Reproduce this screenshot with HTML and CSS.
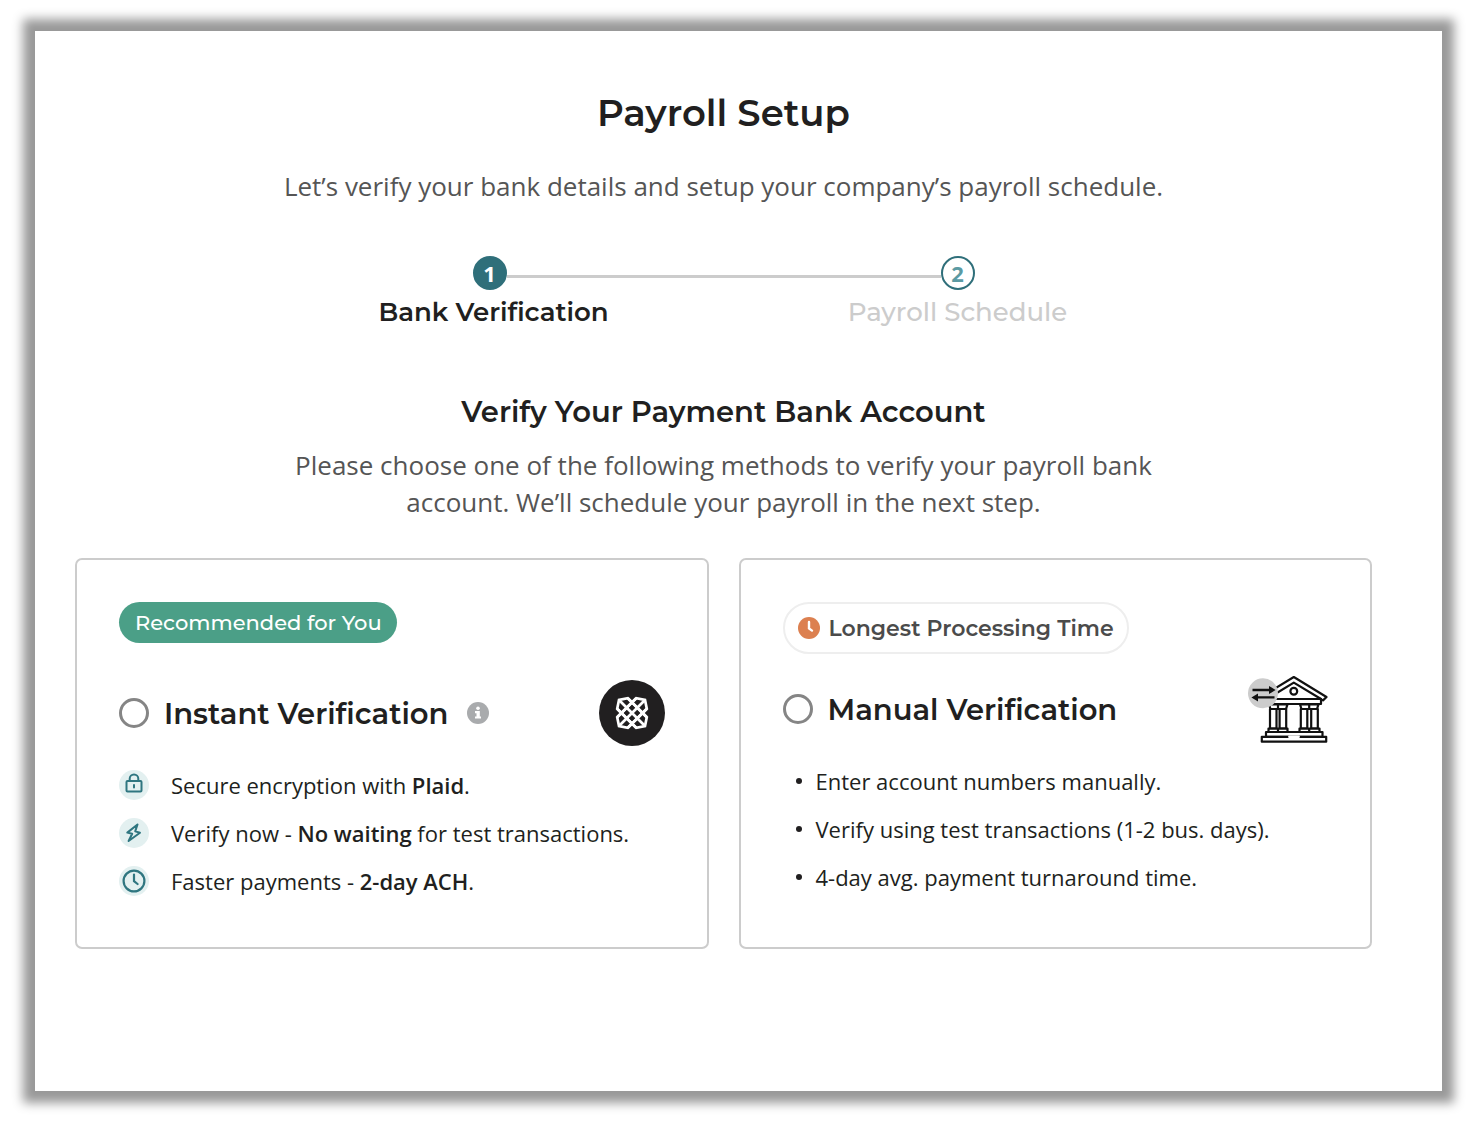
FILE: index.html
```html
<!DOCTYPE html>
<html lang="en">
<head>
<meta charset="UTF-8">
<meta name="viewport" content="width=device-width, initial-scale=1.0">
<title>Payroll Setup</title>
<link rel="stylesheet" href="styles.css">
</head>
<body>

<main class="panel">
  <h1>Payroll Setup</h1>
  <p class="intro">Let’s verify your bank details and setup your company’s payroll schedule.</p>

  <ol class="steps">
    <li class="step active">
      <span class="step-number">1</span>
      <span class="step-label">Bank Verification</span>
    </li>
    <li class="step">
      <span class="step-number">2</span>
      <span class="step-label">Payroll Schedule</span>
    </li>
  </ol>

  <h2>Verify Your Payment Bank Account</h2>
  <p class="help">Please choose one of the following methods to verify your payroll bank account. We’ll schedule your payroll in the next step.</p>

  <form class="methods">
    <section class="card instant">
      <div class="badge badge-green">Recommended for You</div>
      <div class="card-title">
        <input type="radio" id="instant" name="method" value="instant">
        <label for="instant">Instant Verification</label>
        <svg class="info" viewBox="0 0 22 22" aria-hidden="true">
          <circle cx="11" cy="11" r="11" fill="#a9abad"/>
          <circle cx="11" cy="6.2" r="1.8" fill="#fff"/>
          <path d="M8 9h4.8v5.4H14v2.2H8v-2.2h1.5v-3.2H8z" fill="#fff"/>
        </svg>
        <svg class="plaid-logo" viewBox="0 0 66 66" aria-hidden="true">
          <circle cx="33" cy="33" r="33" fill="#211f20"/>
          <g fill="none" stroke="#fff" stroke-width="2.7" stroke-linejoin="miter">
            <path d="M33 22.4L37.2 18.2L46 20L47.8 28.8L43.6 33L47.8 37.2L46 46L37.2 47.8L33 43.6L28.8 47.8L20 46L18.2 37.2L22.4 33L18.2 28.8L20 20L28.8 18.2z"/>
            <path d="M33 22.4L43.6 33L33 43.6L22.4 33z"/>
            <path d="M28.8 18.2L47.8 37.2M37.2 18.2L18.2 37.2M18.2 28.8L37.2 47.8M47.8 28.8L28.8 47.8"/>
            <path d="M20 20L46 46M46 20L20 46"/>
          </g>
        </svg>
      </div>
      <ul class="features">
        <li>
          <svg class="feature-icon" viewBox="0 0 30 30" aria-hidden="true">
            <circle cx="15" cy="15" r="15" fill="#e3f0f0"/>
            <g fill="none" stroke="#2f7680" stroke-width="2" stroke-linejoin="round" stroke-linecap="round">
              <rect x="7.5" y="11" width="15" height="10.5" rx="1"/>
              <path d="M10.7 11V8.7a4.3 4.3 0 0 1 8.6 0V11M15 15v2.6"/>
            </g>
          </svg>
          <span>Secure encryption with <b>Plaid</b>.</span>
        </li>
        <li>
          <svg class="feature-icon" viewBox="0 0 30 30" aria-hidden="true">
            <circle cx="15" cy="15" r="15" fill="#e3f0f0"/>
            <path d="M18.5 6.5L8.3 14.6L13.2 15.8L9.6 23L21 14.8L16.2 13.4z" fill="none" stroke="#2f7680" stroke-width="2" stroke-linejoin="round"/>
          </svg>
          <span>Verify now - <b>No waiting</b> for test transactions.</span>
        </li>
        <li>
          <svg class="feature-icon" viewBox="0 0 30 30" aria-hidden="true">
            <circle cx="15" cy="15" r="15" fill="#e3f0f0"/>
            <circle cx="15" cy="15" r="10.4" fill="none" stroke="#2f7680" stroke-width="2.2"/>
            <path d="M15 8.5v6.7l3.6 2.8" fill="none" stroke="#2f7680" stroke-width="2.2" stroke-linecap="round"/>
          </svg>
          <span>Faster payments - <b>2-day ACH</b>.</span>
        </li>
      </ul>
    </section>

    <section class="card manual">
      <div class="badge badge-outline">
        <svg class="clock" viewBox="0 0 22 22" aria-hidden="true">
          <circle cx="11" cy="11" r="11" fill="#dc8050"/>
          <path d="M11 5v6.4l3 2.2" fill="none" stroke="#fff" stroke-width="2.4" stroke-linecap="round"/>
        </svg>
        Longest Processing Time
      </div>
      <div class="card-title">
        <input type="radio" id="manual" name="method" value="manual">
        <label for="manual">Manual Verification</label>
        <svg class="bank" viewBox="0 0 80 68" aria-hidden="true">
          <g fill="#fff" stroke="#111" stroke-width="2.2" stroke-linejoin="round" stroke-linecap="round">
            <path d="M45.8 2L13 22l2.5 3.4L19 23.6h53l3 1.8L78.5 22z"/>
            <path d="M45.8 7.6L19 24h54z"/>
            <circle cx="45.8" cy="16.3" r="3.4"/>
            <path d="M19 24h54v5H19z"/>
            <path d="M21 29.4h18.5l-1.5 4.6H22.5zM52 29.4h18.5L69 34H53.5zM30 30v4M61.2 30v4"/>
            <path d="M22 34h6.5v19.6H22zM31.6 34h6.6v19.6h-6.6zM52.8 34h6.5v19.6h-6.5zM63.2 34h6.6v19.6h-6.6z"/>
            <path d="M20.5 53.6h19v3.4h-19zM51.5 53.6h20V57h-20zM30 53.6V57M61.2 53.6V57"/>
            <path d="M18 57h56.5v4.8H18z"/>
            <path d="M13.8 61.8h64.4v4.9H13.8z"/>
            <path d="M41.5 61.8h9" stroke="#fff" stroke-width="2.8"/>
          </g>
          <circle cx="15" cy="18.3" r="15" fill="#ccc"/>
          <path d="M4.5 15h18M8 22.4h18.5" stroke="#111" stroke-width="2.3"/>
          <path d="M21 11l6.6 4-6.6 4zM10 18.4l-6.6 4 6.6 4z" fill="#111"/>
        </svg>
      </div>
      <ul class="notes">
        <li>Enter account numbers manually.</li>
        <li>Verify using test transactions (1-2 bus. days).</li>
        <li>4-day avg. payment turnaround time.</li>
      </ul>
    </section>
  </form>
</main>

</body>
</html>
```

FILE: styles.css
```css
* {
  box-sizing: border-box;
}

body {
  margin: 0;
  padding: 31px 36px 31px 35px;
  background-color: #fff;
  color: #211f20;
  font-family: "Open Sans", sans-serif;
}

h1, h2, p, ul, ol {
  margin: 0;
  padding: 0;
}

ul, ol {
  list-style: none;
}

h1, h2, .step-label, .badge, .card-title {
  font-family: Montserrat, Inter, sans-serif;
  font-weight: 600;
}

.panel {
  min-height: calc(100vh - 62px);
  padding: 59px 70px 59px 40px;
  background-color: #fff;
  box-shadow: 0 0 10px 12px #999;
  text-align: center;
}

h1 {
  margin-bottom: 32px;
  font-size: 37px;
  line-height: 46px;
}

h2 {
  margin-bottom: 17px;
  font-size: 29px;
  line-height: 36px;
}

.intro, .help {
  color: #555;
  font-size: 26px;
  line-height: 37px;
}

.help {
  max-width: 880px;
  margin: 0 auto 37px;
}

/* progress steps */
.steps {
  display: flex;
  justify-content: center;
  margin: 51px 0 64px;
}

.step {
  display: grid;
  grid-template-columns: 1fr 34px 1fr;
  row-gap: 4px;
  align-items: center;
  width: 468px;
  color: #ccc;
}

.step.active {
  color: #211f20;
}

.step-number {
  grid-column: 2;
  grid-row: 1;
  height: 34px;
  border: 2px solid #2f6f7a;
  border-radius: 50%;
  color: #5b9aa3;
  font-size: 22px;
  font-weight: 700;
  line-height: 31px;
}

.active .step-number {
  background-color: #2f6f7a;
  color: #fff;
}

.step::before {
  content: "";
  grid-column: 1;
  grid-row: 1;
  height: 3px;
  margin-top: 6px;
  background-color: #ccc;
}

.step.active::before {
  grid-column: 3;
}

.step-label {
  grid-column: 1 / 4;
  font-size: 26px;
  font-weight: 500;
  line-height: 36px;
}

.active .step-label {
  padding-left: 8px;
  font-weight: 600;
}

/* verification methods */
.methods {
  display: grid;
  grid-template-columns: 1fr 1fr;
  gap: 30px;
  text-align: left;
}

.card {
  padding: 42px;
  border: 2px solid #ccc;
  border-radius: 7px;
}

.badge {
  display: flex;
  align-items: center;
  width: fit-content;
  border-radius: 26px;
  font-size: 22px;
}

.badge-green {
  height: 41px;
  margin-bottom: 37px;
  padding: 0 15px 0 16px;
  background-color: #4b9f87;
  color: #fff;
  font-size: 21px;
  font-weight: 500;
}

.badge-outline {
  gap: 9px;
  height: 52px;
  margin-bottom: 22px;
  padding: 0 13px;
  border: 2px solid #eee;
  color: #4b4b4b;
}

.clock, .info {
  width: 22px;
  height: 22px;
}

.card-title {
  display: flex;
  align-items: center;
  gap: 15px;
  height: 66px;
  font-size: 29px;
}

.card-title input {
  appearance: none;
  width: 30px;
  height: 30px;
  margin: 0;
  border: 3px solid #858585;
  border-radius: 50%;
}

.card-title input:checked {
  background-color: #2f6f7a;
  box-shadow: inset 0 0 0 4px #fff;
}

.info {
  margin-left: 4px;
}

.plaid-logo {
  width: 66px;
  height: 66px;
  margin-left: auto;
}

.bank {
  width: 80px;
  height: 68px;
  margin-left: auto;
}

.features, .notes {
  margin-top: 15px;
  font-size: 22px;
  line-height: 48px;
}

.features li, .notes li {
  display: flex;
  align-items: center;
}

.features b {
  font-weight: 600;
}

.feature-icon {
  width: 30px;
  height: 30px;
  margin-right: 22px;
}

.notes {
  padding-left: 13px;
}

.notes li::before {
  content: "";
  width: 6px;
  height: 6px;
  margin-right: 14px;
  border-radius: 50%;
  background-color: #211f20;
}
```
